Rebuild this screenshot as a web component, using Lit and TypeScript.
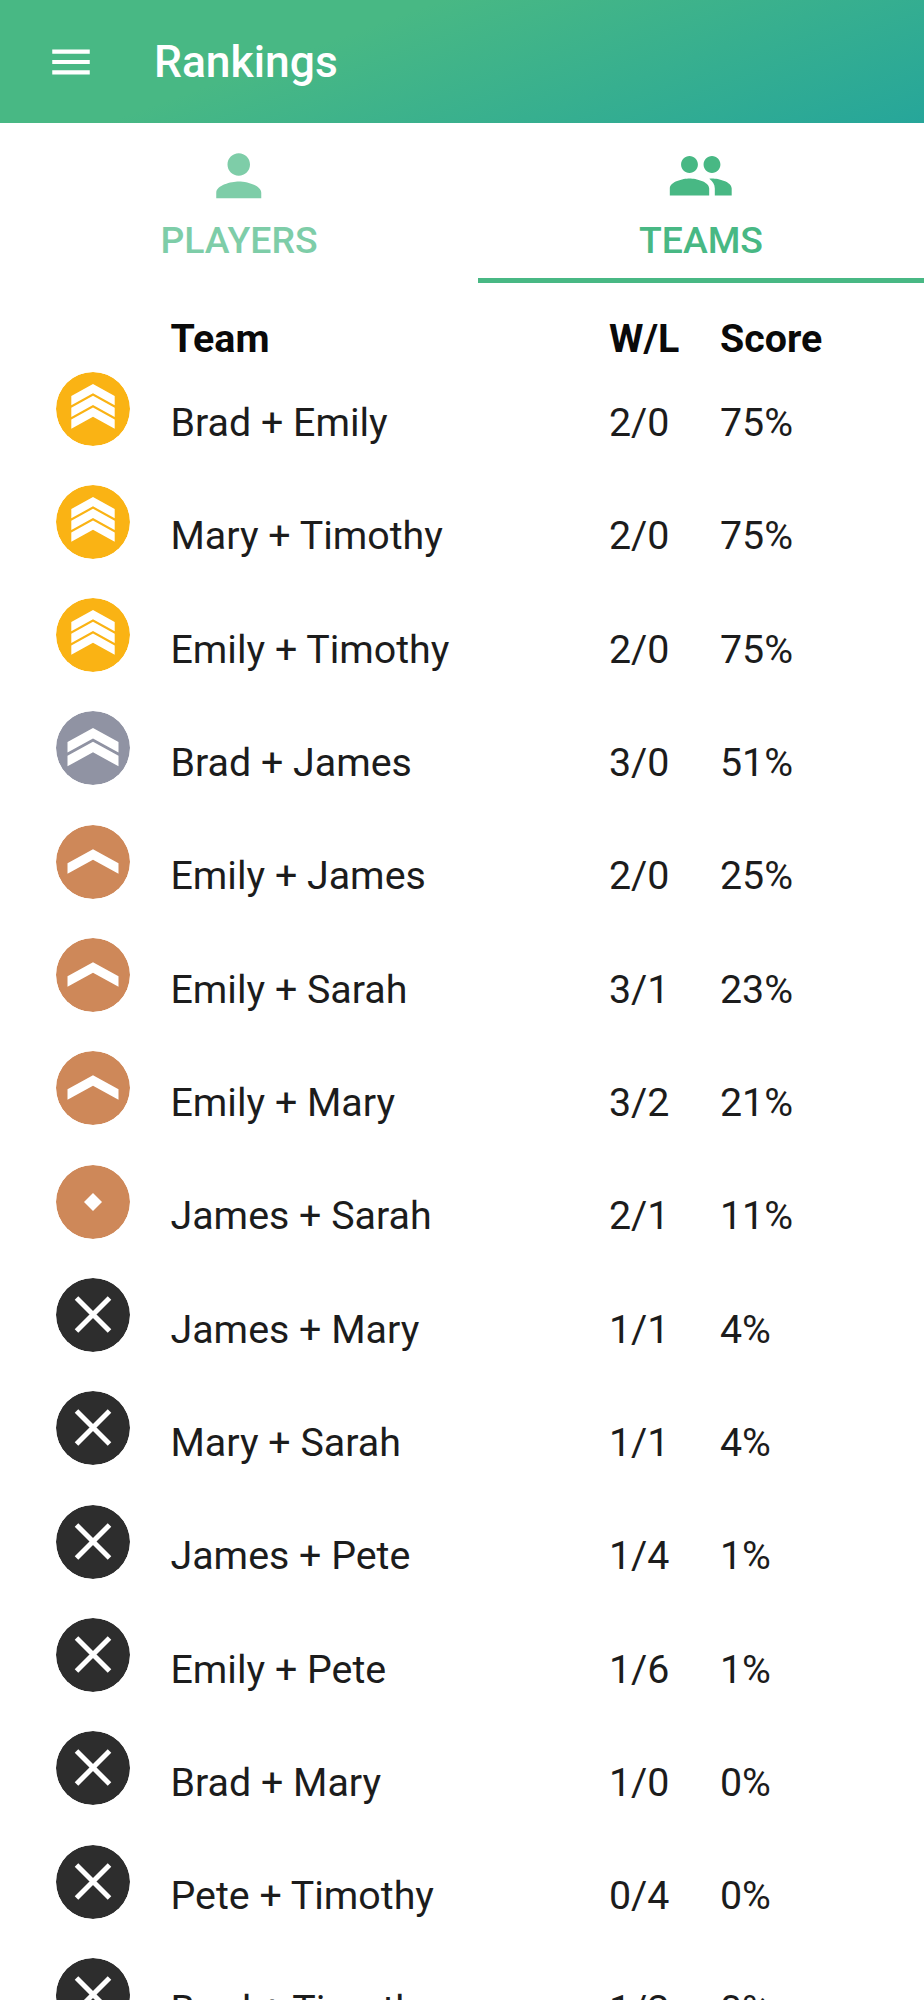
import { LitElement, html, css, svg } from 'lit';
import { customElement } from 'lit/decorators.js';

type Rank = 'gold' | 'silver' | 'bronze' | 'diamond' | 'none';

const TEAMS: [Rank, string, string, string][] = [
  ['gold', 'Brad + Emily', '2/0', '75%'],
  ['gold', 'Mary + Timothy', '2/0', '75%'],
  ['gold', 'Emily + Timothy', '2/0', '75%'],
  ['silver', 'Brad + James', '3/0', '51%'],
  ['bronze', 'Emily + James', '2/0', '25%'],
  ['bronze', 'Emily + Sarah', '3/1', '23%'],
  ['bronze', 'Emily + Mary', '3/2', '21%'],
  ['diamond', 'James + Sarah', '2/1', '11%'],
  ['none', 'James + Mary', '1/1', '4%'],
  ['none', 'Mary + Sarah', '1/1', '4%'],
  ['none', 'James + Pete', '1/4', '1%'],
  ['none', 'Emily + Pete', '1/6', '1%'],
  ['none', 'Brad + Mary', '1/0', '0%'],
  ['none', 'Pete + Timothy', '0/4', '0%'],
  ['none', 'Brad + Timothy', '1/2', '0%'],
];

const RANK_COLORS: Record<Rank, string> = {
  gold: '#fab314',
  silver: '#9093a3',
  bronze: '#ce8859',
  diamond: '#ce8859',
  none: '#2d2d2d',
};

// chevron whose apex sits at (37, top)
const chevron = (top: number, half: number, rise: number, thick: number) =>
  svg`<path fill="#fff" d="M37 ${top}L${37 + half} ${top + rise}V${top + rise + thick}L37 ${top + thick}L${37 - half} ${top + rise + thick}V${top + rise}Z"/>`;

function rankGlyph(rank: Rank) {
  switch (rank) {
    case 'gold':
      return [chevron(12, 21.7, 12, 9.3), chevron(23.7, 21.7, 12, 9.3), chevron(35.4, 21.7, 12, 9.3)];
    case 'silver':
      return [chevron(17, 25.5, 14, 10.5), chevron(30.8, 25.5, 14, 10.5)];
    case 'bronze':
      return chevron(24.3, 25.5, 14, 10.5);
    case 'diamond':
      return svg`<path fill="#fff" d="M37 28L46 37L37 46L28 37Z"/>`;
    default:
      return svg`<path stroke="#fff" stroke-width="5" fill="none" d="M20.5 20L53.5 53M53.5 20L20.5 53"/>`;
  }
}

@customElement('app-root')
export class AppRoot extends LitElement {
  static styles = css`
    :host {
      display: block;
      height: 2000px;
      overflow: hidden;
      background: #fff;
      font-family: Roboto, sans-serif;
      color: #1c1c1c;
    }

    .appbar {
      height: 123px;
      display: flex;
      align-items: center;
      background: linear-gradient(160deg, #48b884 35%, #26a69a 100%);
      color: #fff;
    }

    .menu {
      width: 50px;
      height: 50px;
      margin-left: 46px;
      fill: #fff;
    }

    .title {
      margin-left: 58px;
      font-size: 44.4px;
      font-weight: 500;
    }

    .tabs {
      display: grid;
      grid-template-columns: 478px 446px;
      height: 160px;
    }

    .tab {
      display: flex;
      flex-direction: column;
      align-items: center;
      padding-top: 19px;
      box-sizing: border-box;
      color: #48b884;
      font-size: 37.4px;
      font-weight: 500;
    }

    .tab svg {
      width: 67.5px;
      height: 67.5px;
      fill: currentColor;
    }

    .tab .label {
      line-height: 40px;
      margin-top: 10px;
    }

    .tab.idle {
      opacity: 0.7;
    }

    .tab.active {
      border-bottom: 5px solid #48b884;
    }

    .table {
      padding-left: 56.4px;
      font-size: 39.375px;
    }

    .row {
      display: grid;
      grid-template-columns: 114.1px 438.5px 111px 1fr;
      height: 113.33px;
    }

    .row.head {
      height: 88.5px;
      padding-top: 35px;
      box-sizing: border-box;
      font-weight: 700;
      color: #0a0a0a;
    }

    .cell {
      line-height: 42px;
      padding-top: 30.5px;
    }

    .head .cell {
      padding-top: 0;
    }

    .badge {
      width: 74px;
      height: 74px;
      border-radius: 50%;
      display: block;
    }
  `;

  render() {
    return html`
      <div class="appbar">
        <svg class="menu" viewBox="0 0 24 24"><path d="M3 18h18v-2H3v2zm0-5h18v-2H3v2zm0-7v2h18V6H3z"/></svg>
        <div class="title">Rankings</div>
      </div>
      <div class="tabs">
        <div class="tab idle">
          <svg viewBox="0 0 24 24"><path d="M12 12c2.21 0 4-1.79 4-4s-1.79-4-4-4-4 1.79-4 4 1.79 4 4 4zm0 2c-2.67 0-8 1.34-8 4v2h16v-2c0-2.66-5.33-4-8-4z"/></svg>
          <div class="label">PLAYERS</div>
        </div>
        <div class="tab active">
          <svg viewBox="0 0 24 24"><path d="M16 11c1.66 0 2.99-1.34 2.99-3S17.66 5 16 5c-1.66 0-3 1.34-3 3s1.34 3 3 3zm-8 0c1.66 0 2.99-1.34 2.99-3S9.66 5 8 5C6.34 5 5 6.34 5 8s1.34 3 3 3zm0 2c-2.33 0-7 1.17-7 3.5V19h14v-2.5c0-2.33-4.67-3.5-7-3.5zm8 0c-.29 0-.62.02-.97.05 1.16.84 1.97 1.97 1.97 3.45V19h6v-2.5c0-2.33-4.67-3.5-7-3.5z"/></svg>
          <div class="label">TEAMS</div>
        </div>
      </div>
      <div class="table">
        <div class="row head">
          <div></div>
          <div class="cell">Team</div>
          <div class="cell">W/L</div>
          <div class="cell">Score</div>
        </div>
        ${TEAMS.map(([rank, name, record, score]) => html`
          <div class="row">
            <svg class="badge" viewBox="0 0 74 74">
              <circle cx="37" cy="37" r="37" fill=${RANK_COLORS[rank]}></circle>
              ${rankGlyph(rank)}
            </svg>
            <div class="cell">${name}</div>
            <div class="cell">${record}</div>
            <div class="cell">${score}</div>
          </div>
        `)}
      </div>
    `;
  }
}
